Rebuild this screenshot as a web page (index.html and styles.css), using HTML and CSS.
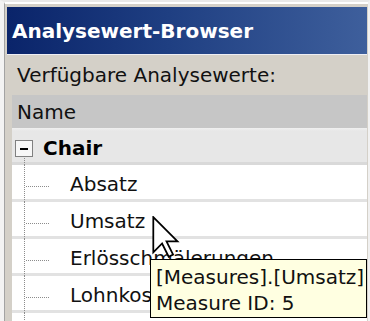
FILE: index.html
```html
<!DOCTYPE html>
<html lang="de">
<head>
<meta charset="utf-8">
<title>Analysewert-Browser</title>
<link rel="stylesheet" href="styles.css">
</head>
<body>
<div class="page">
  <div class="frame">
    <div class="inner">
      <div class="titlebar">Analysewert-Browser</div>
      <div class="label">Verfügbare Analysewerte:</div>
      <div class="list">
        <div class="header">Name</div>
        <div class="row parent"><span class="toggle"><span class="minus"></span></span><span class="ptext">Chair</span></div>
        <div class="row child"><span class="branch"></span><span class="ctext">Absatz</span></div>
        <div class="row child"><span class="branch"></span><span class="ctext">Umsatz</span></div>
        <div class="row child"><span class="branch"></span><span class="ctext">Erlösschmälerungen</span></div>
        <div class="row child"><span class="branch"></span><span class="ctext">Lohnkosten</span></div>
        <div class="row child"><span class="branch"></span></div>
      </div>
    </div>
  </div>
  <div class="tooltip">[Measures].[Umsatz]<br>Measure ID: 5</div>
  <svg class="cursor" width="29" height="44" viewBox="0 0 13 20" xmlns="http://www.w3.org/2000/svg">
    <path d="M0.5 0.5 L0.5 16.5 L4.5 12.5 L7.5 18.5 L9.5 17.5 L6.5 11.5 L11.5 11.5 Z" fill="#ffffff" stroke="#000000" stroke-width="0.8" stroke-linejoin="miter"/>
  </svg>
</div>
</body>
</html>
```
FILE: styles.css
```css
* { box-sizing: border-box; }
html, body { margin: 0; padding: 0; background: #ffffff; }
body { font-family: "DejaVu Sans", Verdana, sans-serif; font-size: 20px; color: #000; }

.page {
  position: relative;
  width: 370px;
  height: 321px;
  overflow: hidden;
}

.frame {
  width: 370px;
  height: 321px;
  border-top: 2px solid #e9e9e9;
  border-left: 4px solid #f3f3f3;
  border-right: 2px solid #f1f1f1;
  background: #d4d0c8;
}

.inner {
  height: 100%;
  display: flex;
  flex-direction: column;
  border-top: 2px solid #ffffff;
  border-left: 1px solid #a3a3a3;
  padding: 3px 1px 0 2px;
}

.titlebar {
  height: 48px;
  flex: none;
  display: flex;
  align-items: center;
  padding-left: 5px;
  color: #ffffff;
  font-weight: bold;
  background: linear-gradient(to right, #0a246a 0%, #1f3f82 45%, #3e5f9c 100%);
  border-bottom: 1px solid #eeeef4;
}

.label {
  height: 40px;
  flex: none;
  display: flex;
  align-items: center;
  padding-left: 10px;
  color: #111;
}

.list {
  flex: 1;
  margin-left: 5px;
  background: #ffffff;
  overflow: hidden;
}

.header {
  height: 33px;
  display: flex;
  align-items: center;
  padding-left: 5px;
  background: #c6c6c6;
  color: #111;
}

.row {
  height: 37px;
  display: flex;
  align-items: center;
  background: linear-gradient(to bottom, #ffffff 0, #ffffff 34px, #e2e2e2 34px, #e2e2e2 37px);
}

.parent {
  position: relative;
  padding-left: 3px;
  background: linear-gradient(to bottom, #f0f0f0 0, #e7e7e7 3px, #e7e7e7 34px, #d9d9d9 34px, #d9d9d9 37px);
}

.parent::after {
  content: "";
  position: absolute;
  left: 12px;
  top: 30px;
  height: 7px;
  border-left: 1px dotted #8c8c8c;
}

.toggle {
  width: 18px;
  height: 17px;
  margin-top: 4px;
  border: 1px solid #808080;
  background: #f7f7f7;
  display: flex;
  align-items: center;
  justify-content: center;
}

.minus {
  width: 8px;
  height: 2px;
  background: #000;
}

.ptext {
  margin-left: 10px;
  margin-top: 3px;
  font-weight: bold;
}

.branch {
  position: relative;
  align-self: stretch;
  width: 24px;
  margin-left: 12px;
  border-left: 1px dotted #8c8c8c;
}

.branch::after {
  content: "";
  position: absolute;
  left: 1px;
  top: 21px;
  width: 23px;
  border-top: 1px dotted #8c8c8c;
}

.ctext {
  margin-left: 22px;
  white-space: nowrap;
  color: #111;
}

.tooltip {
  position: absolute;
  left: 150px;
  top: 259px;
  width: 217px;
  height: 59px;
  padding: 4px 0 0 5px;
  border: 1px solid #000;
  background: #ffffe1;
  line-height: 26px;
  color: #111;
  white-space: nowrap;
}

.cursor {
  position: absolute;
  left: 152px;
  top: 216px;
}
```
